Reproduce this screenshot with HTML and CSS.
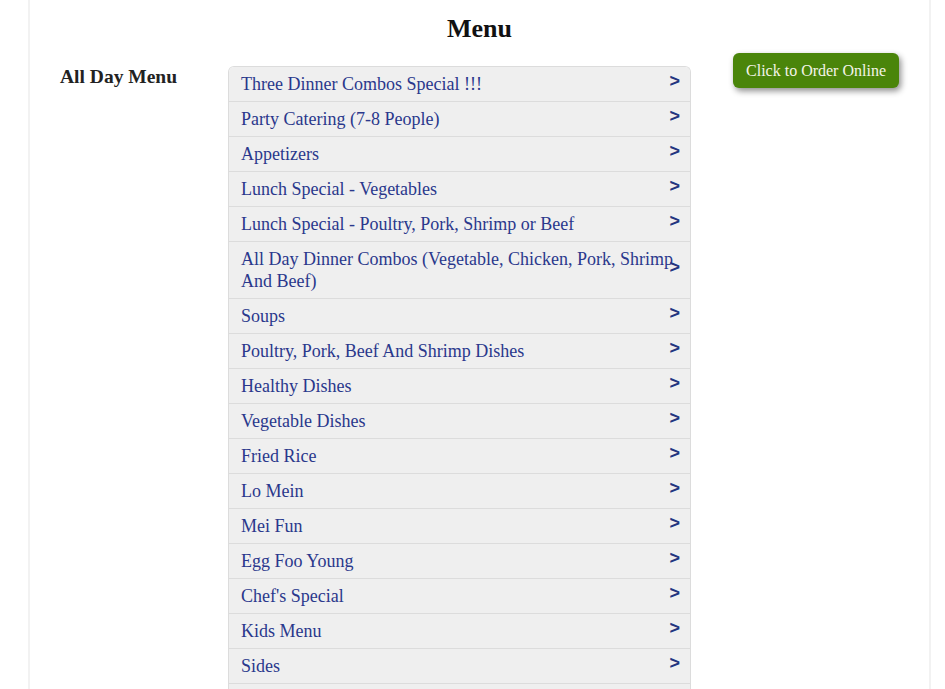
FILE: index.html
```html
<!DOCTYPE html>
<html>
<head>
<meta charset="utf-8">
<link rel="stylesheet" href="styles.css">
</head>
<body>
<div class="page">
  <h1 class="title">Menu</h1>
  <div class="content">
    <div class="side">
      <h2 class="side-title">All Day Menu</h2>
    </div>
    <ul class="menu-list">
      <li class="menu-item"><span class="label">Three Dinner Combos Special !!!</span><span class="chev">&gt;</span></li>
      <li class="menu-item"><span class="label">Party Catering (7-8 People)</span><span class="chev">&gt;</span></li>
      <li class="menu-item"><span class="label">Appetizers</span><span class="chev">&gt;</span></li>
      <li class="menu-item"><span class="label">Lunch Special - Vegetables</span><span class="chev">&gt;</span></li>
      <li class="menu-item"><span class="label">Lunch Special - Poultry, Pork, Shrimp or Beef</span><span class="chev">&gt;</span></li>
      <li class="menu-item"><span class="label">All Day Dinner Combos (Vegetable, Chicken, Pork, Shrimp And Beef)</span><span class="chev">&gt;</span></li>
      <li class="menu-item"><span class="label">Soups</span><span class="chev">&gt;</span></li>
      <li class="menu-item"><span class="label">Poultry, Pork, Beef And Shrimp Dishes</span><span class="chev">&gt;</span></li>
      <li class="menu-item"><span class="label">Healthy Dishes</span><span class="chev">&gt;</span></li>
      <li class="menu-item"><span class="label">Vegetable Dishes</span><span class="chev">&gt;</span></li>
      <li class="menu-item"><span class="label">Fried Rice</span><span class="chev">&gt;</span></li>
      <li class="menu-item"><span class="label">Lo Mein</span><span class="chev">&gt;</span></li>
      <li class="menu-item"><span class="label">Mei Fun</span><span class="chev">&gt;</span></li>
      <li class="menu-item"><span class="label">Egg Foo Young</span><span class="chev">&gt;</span></li>
      <li class="menu-item"><span class="label">Chef's Special</span><span class="chev">&gt;</span></li>
      <li class="menu-item"><span class="label">Kids Menu</span><span class="chev">&gt;</span></li>
      <li class="menu-item"><span class="label">Sides</span><span class="chev">&gt;</span></li>
      <li class="menu-item menu-item-empty"></li>
    </ul>
    <div class="order">
      <a class="order-btn" href="#">Click to Order Online</a>
    </div>
  </div>
</div>
</body>
</html>
```
FILE: styles.css
```css
html, body {
  margin: 0;
  padding: 0;
  background: #ffffff;
  font-family: "Liberation Serif", "Times New Roman", serif;
  overflow: hidden;
}

.page {
  margin: 0 14px 0 28px;
  border-left: 2px solid #f2f2f2;
  border-right: 2px solid #f2f2f2;
  min-height: 689px;
  box-sizing: border-box;
  padding: 0 30px;
}

.title {
  margin: 0;
  padding-top: 14px;
  font-size: 26px;
  line-height: 30px;
  font-weight: bold;
  color: #111;
  text-align: center;
}

.content {
  display: flex;
  align-items: flex-start;
  margin-top: 9px;
}

.side {
  width: 168px;
  flex: none;
  padding-top: 13px;
}

.side-title {
  margin: 0;
  font-size: 19.5px;
  line-height: 22px;
  font-weight: bold;
  color: #222;
}

.menu-list {
  list-style: none;
  margin: 13px 0 0 0;
  padding: 0;
  width: 461px;
  flex: none;
  border: 1px solid #dcdcdc;
  border-bottom: none;
  border-radius: 6px 6px 0 0;
  overflow: hidden;
}

.menu-item {
  position: relative;
  background: #efefef;
  border-bottom: 1px solid #dcdcdc;
  padding: 6px 11px 6px 12px;
  font-size: 18px;
  line-height: 22px;
  color: #2a388c;
}

.menu-item-empty {
  height: 22px;
}

.menu-item .label {
  display: block;
}

.chev {
  position: absolute;
  right: 10px;
  top: 50%;
  transform: translateY(-68%);
  font-family: "Liberation Sans", Arial, sans-serif;
  font-weight: bold;
  font-size: 18px;
  line-height: 18px;
  color: #23357f;
}

.order {
  flex: 1;
  display: flex;
  justify-content: flex-end;
}

.order-btn {
  display: block;
  width: 166px;
  height: 35px;
  box-sizing: border-box;
  background: #4a850a;
  color: #f4f4e8;
  border-radius: 6px;
  font-size: 16px;
  line-height: 35px;
  text-align: center;
  text-decoration: none;
  box-shadow: 2px 3px 6px rgba(0, 0, 0, 0.45);
}
```
